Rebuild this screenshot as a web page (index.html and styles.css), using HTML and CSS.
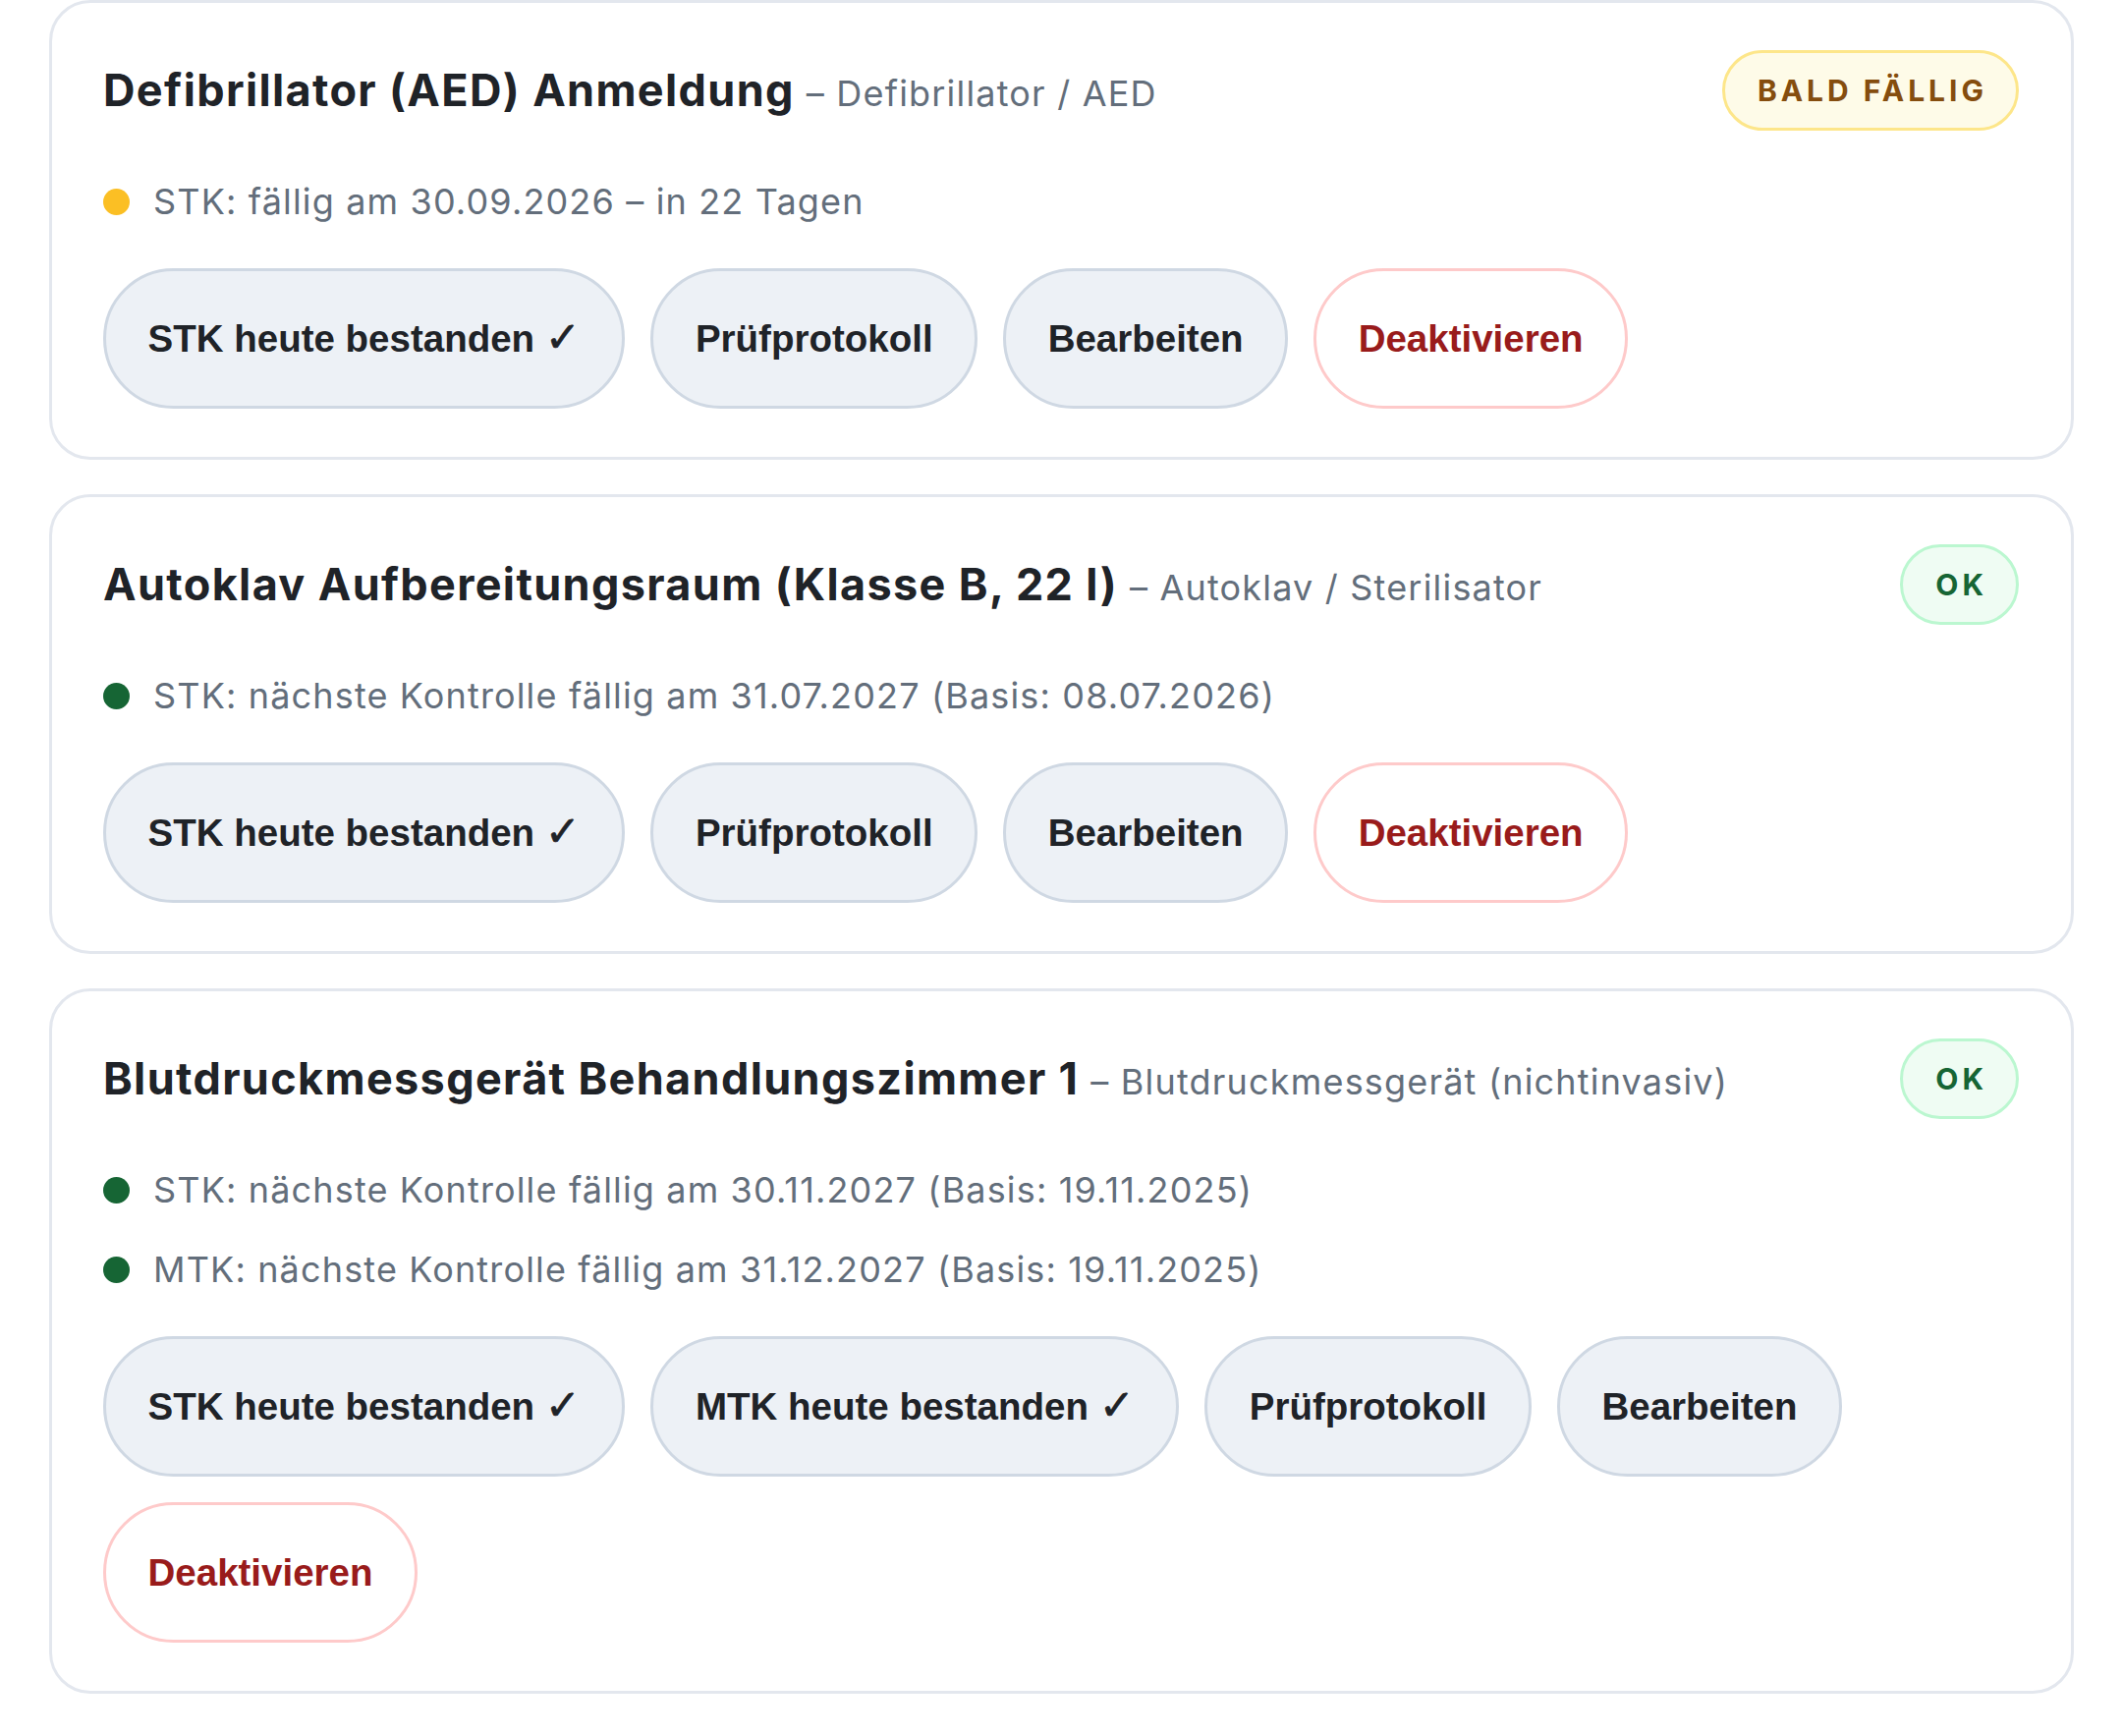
FILE: index.html
```html
<!DOCTYPE html>
<html lang="de">
<head>
<meta charset="utf-8">
<title>Geräte</title>
<link rel="stylesheet" href="styles.css">
</head>
<body>
<main class="list">
  <article class="card">
    <div class="card-head">
      <h3 class="title"><span class="name">Defibrillator (AED) Anmeldung</span><span class="type">– Defibrillator / AED</span></h3>
      <span class="badge badge-warn">BALD FÄLLIG</span>
    </div>
    <ul class="checks">
      <li class="check"><span class="dot dot-warn"></span>STK: fällig am 30.09.2026 – in 22 Tagen</li>
    </ul>
    <div class="actions">
      <button class="btn">STK heute bestanden <span class="tick">✓</span></button>
      <button class="btn">Prüfprotokoll</button>
      <button class="btn">Bearbeiten</button>
      <button class="btn btn-danger">Deaktivieren</button>
    </div>
  </article>

  <article class="card">
    <div class="card-head">
      <h3 class="title"><span class="name">Autoklav Aufbereitungsraum (Klasse B, 22 l)</span><span class="type">– Autoklav / Sterilisator</span></h3>
      <span class="badge badge-ok">OK</span>
    </div>
    <ul class="checks">
      <li class="check"><span class="dot dot-ok"></span>STK: nächste Kontrolle fällig am 31.07.2027 (Basis: 08.07.2026)</li>
    </ul>
    <div class="actions">
      <button class="btn">STK heute bestanden <span class="tick">✓</span></button>
      <button class="btn">Prüfprotokoll</button>
      <button class="btn">Bearbeiten</button>
      <button class="btn btn-danger">Deaktivieren</button>
    </div>
  </article>

  <article class="card">
    <div class="card-head">
      <h3 class="title"><span class="name">Blutdruckmessgerät Behandlungszimmer 1</span><span class="type">– Blutdruckmessgerät (nichtinvasiv)</span></h3>
      <span class="badge badge-ok">OK</span>
    </div>
    <ul class="checks">
      <li class="check"><span class="dot dot-ok"></span>STK: nächste Kontrolle fällig am 30.11.2027 (Basis: 19.11.2025)</li>
      <li class="check"><span class="dot dot-ok"></span>MTK: nächste Kontrolle fällig am 31.12.2027 (Basis: 19.11.2025)</li>
    </ul>
    <div class="actions">
      <button class="btn">STK heute bestanden <span class="tick">✓</span></button>
      <button class="btn">MTK heute bestanden <span class="tick">✓</span></button>
      <button class="btn">Prüfprotokoll</button>
      <button class="btn">Bearbeiten</button>
      <button class="btn btn-danger">Deaktivieren</button>
    </div>
  </article>
</main>
</body>
</html>
```

FILE: styles.css
```css
html, body {
  margin: 0;
  padding: 0;
  background: #ffffff;
}

body {
  font-family: Inter, "Noto Sans", "Liberation Sans", sans-serif;
  color: #1f2328;
}

.list {
  display: flex;
  flex-direction: column;
  gap: 35px;
  padding: 0 49px 40px 50px;
}

.card {
  border: 3px solid #e3e7ee;
  border-radius: 42px;
  padding: 48px 53px 49px 52px;
  background: #ffffff;
}

.card-head {
  display: flex;
  align-items: center;
  justify-content: space-between;
  gap: 24px;
}

.title {
  margin: 0;
  flex: 1 1 auto;
  min-width: 0;
  line-height: 1.2;
  font-size: 36px;
}

.name {
  font-size: 45px;
  font-weight: 700;
  letter-spacing: 0.03em;
  color: #1f2328;
}

.type {
  margin-left: 12px;
  font-size: 36px;
  font-weight: 400;
  letter-spacing: 0.033em;
  color: #636e7b;
}

.badge {
  flex: 0 0 auto;
  font-size: 30px;
  line-height: 36px;
  font-weight: 700;
  letter-spacing: 4px;
  padding: 20px 29px 20px 33px;
  border-radius: 999px;
  border: 3px solid transparent;
}

.badge-warn {
  background: #fefbe8;
  border-color: #fde68a;
  color: #854d0e;
}

.badge-ok {
  background: #effcf3;
  border-color: #bbf7d0;
  color: #166534;
}

.checks {
  list-style: none;
  margin: 50px 0 0 0;
  padding: 0;
  display: flex;
  flex-direction: column;
  gap: 37px;
}

.check {
  display: flex;
  align-items: center;
  gap: 24px;
  font-size: 36px;
  line-height: 44px;
  letter-spacing: 0.032em;
  color: #636e7b;
}

.dot {
  flex: 0 0 auto;
  width: 27px;
  height: 27px;
  border-radius: 50%;
}

.dot-warn {
  background: #fbbf24;
}

.dot-ok {
  background: #166534;
}

.actions {
  display: flex;
  flex-wrap: wrap;
  gap: 26px;
  margin-top: 46px;
}

.btn {
  font-family: "Liberation Sans", Arial, "DejaVu Sans", sans-serif;
  font-size: 38.5px;
  font-weight: 700;
  line-height: 44px;
  padding: 47px 42.5px 46px;
  border-radius: 999px;
  border: 3px solid #cfd8e3;
  background: #edf1f6;
  color: #1f2328;
}

.tick {
  font-family: "DejaVu Sans", sans-serif;
  font-weight: 700;
  font-size: 1.12em;
  line-height: 0;
  -webkit-text-stroke: 0.7px currentColor;
}

.btn-danger {
  background: #ffffff;
  border-color: #fecaca;
  color: #991b1b;
}
```
